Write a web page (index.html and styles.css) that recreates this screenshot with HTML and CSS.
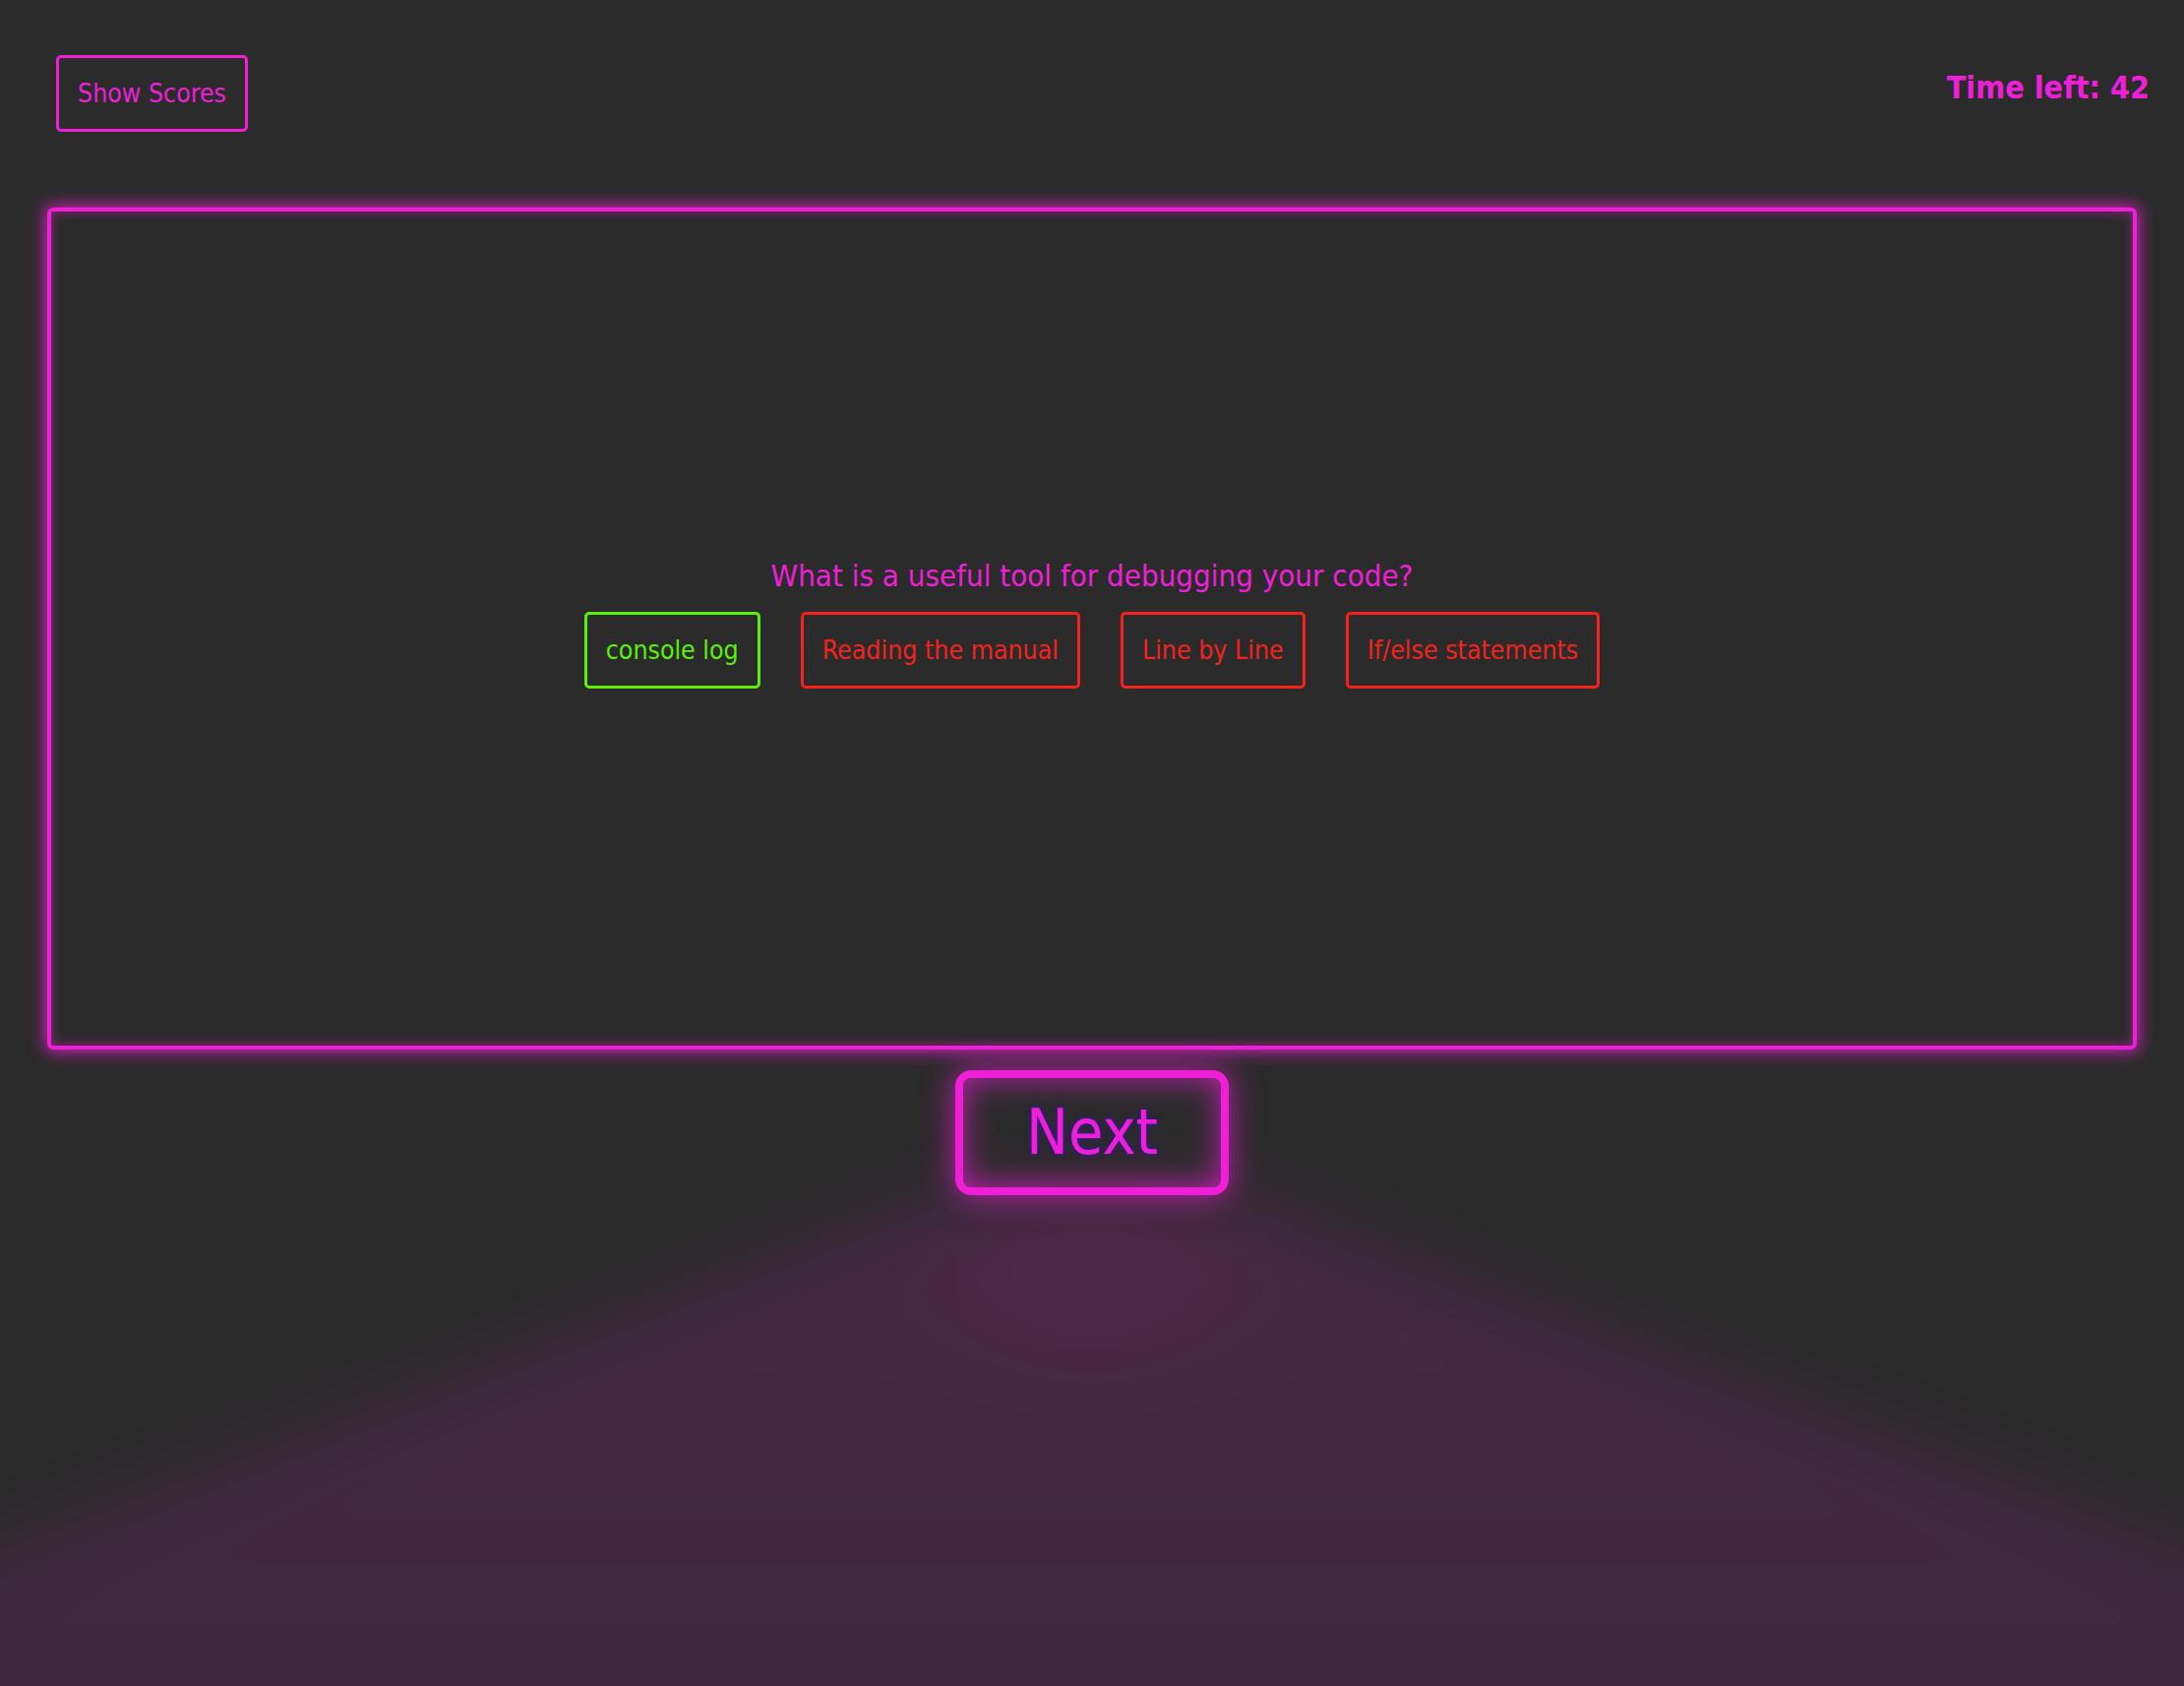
FILE: index.html
```html
<!DOCTYPE html>
<html lang="en">
<head>
<meta charset="utf-8">
<title>Quiz</title>
<link rel="stylesheet" href="styles.css">
</head>
<body>
<div class="page">
  <header class="top">
    <button class="btn scores">Show Scores</button>
    <div class="timer">Time left: 42</div>
  </header>
  <main class="card">
    <div class="question">What is a useful tool for debugging your code?</div>
    <div class="answers">
      <button class="btn answer correct">console log</button>
      <button class="btn answer wrong">Reading the manual</button>
      <button class="btn answer wrong">Line by Line</button>
      <button class="btn answer wrong">If/else statements</button>
    </div>
  </main>
  <div class="next-row">
    <div class="floor-wrap"><div class="floor-glow"><div class="floor-beam"></div></div></div>
    <button class="next">Next</button>
  </div>
</div>
</body>
</html>
```
FILE: styles.css
```css
html, body {
  margin: 0;
  padding: 0;
}
body {
  background: #2b2b2b;
  font-family: "DejaVu Sans Condensed", "DejaVu Sans", sans-serif;
  font-stretch: condensed;
  color: #ef1fd8;
  min-height: 1714px;
  overflow: hidden;
}
.page {
  display: flex;
  flex-direction: column;
}
.top {
  display: flex;
  justify-content: space-between;
  align-items: flex-start;
  padding: 56px 35px 0 57px;
}
.btn {
  font-family: inherit;
  font-stretch: condensed;
  font-size: 26.5px;
  line-height: 36px;
  background: transparent;
  border: 3px solid currentColor;
  border-radius: 5px;
  padding: 18px 19px;
  cursor: pointer;
}
.scores {
  color: #ef1fd8;
}
.timer {
  font-weight: bold;
  font-size: 32px;
  line-height: 38px;
  margin-top: 14px;
  color: #ef1fd8;
}
.card {
  margin: 77px 48px 0 48px;
  height: 836px;
  border: 4px solid #ef1fd8;
  border-radius: 6px;
  box-shadow: 0 0 16px 3px rgba(239, 31, 216, 0.75), inset 0 0 12px rgba(239, 31, 216, 0.5);
  display: flex;
  flex-direction: column;
  align-items: center;
  justify-content: center;
  padding-bottom: 12px;
  box-sizing: content-box;
}
.question {
  font-size: 31px;
  line-height: 38px;
  color: #ef1fd8;
  margin-bottom: 18px;
}
.answers {
  display: flex;
  gap: 41px;
}
.answer.correct {
  color: #5af00a;
}
.answer.wrong {
  color: #f5221c;
}
.next-row {
  position: relative;
  display: flex;
  justify-content: center;
  margin-top: 21px;
}
.floor-wrap {
  position: absolute;
  top: 60px;
  left: 50%;
  width: 2220px;
  height: 566px;
  margin-left: -1110px;
  overflow: hidden;
  pointer-events: none;
  z-index: 0;
}
.floor-glow {
  position: absolute;
  top: 0;
  left: -300px;
  width: 2820px;
  height: 760px;
  filter: blur(36px);
}
.floor-beam {
  width: 100%;
  height: 100%;
  clip-path: polygon(1275px 68px, 1545px 68px, 3400px 760px, -580px 760px);
  background:
    radial-gradient(ellipse 200px 150px at 50% 130px, rgba(239, 31, 216, 0.06), rgba(239, 31, 216, 0) 100%),
    linear-gradient(rgba(239, 31, 216, 0.15), rgba(239, 31, 216, 0.13) 30%, rgba(239, 31, 216, 0.11) 70%);
}
.next {
  position: relative;
  z-index: 1;
  font-family: inherit;
  font-stretch: condensed;
  font-size: 64px;
  line-height: 79px;
  color: #ef1fd8;
  background: transparent;
  border: 8px solid #ef1fd8;
  border-radius: 16px;
  padding: 16px 64px;
  text-shadow: 0 0 3px #3b16b0, 0 0 6px rgba(59, 22, 176, 0.6);
  box-shadow: inset 0 0 32px 0 rgba(239, 31, 216, 0.75), 0 0 32px 0 rgba(239, 31, 216, 0.75);
  cursor: pointer;
}
```
